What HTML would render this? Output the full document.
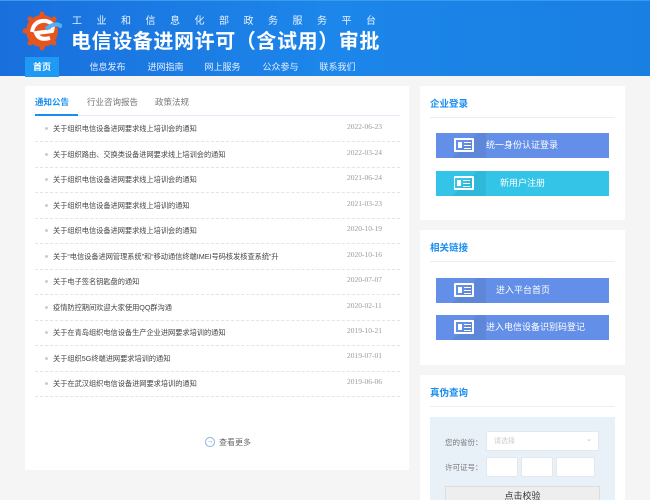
<!DOCTYPE html><html><head><meta charset="utf-8"><style>
*{margin:0;padding:0;box-sizing:border-box}
html,body{width:650px;height:500px;overflow:hidden}
body{background:#f5f5f5;font-family:"Liberation Sans","Noto Sans CJK SC",sans-serif;position:relative}
.hd{position:absolute;left:0;top:0;width:650px;height:76px;background:linear-gradient(90deg,#1a6fdc 0%,#1c86ea 50%,#1a7fe2 100%);border-top:1px solid #3a9af0}
.hd .sub{position:absolute;left:72px;top:11px;color:#e8f2ff;font-size:10px;letter-spacing:14.5px;white-space:nowrap}
.hd .ttl{position:absolute;left:71px;top:24px;color:#fff;font-size:20px;font-weight:bold;letter-spacing:0.6px;white-space:nowrap}
.nav{position:absolute;top:56px;left:0;height:20px;width:650px}
.nav span{position:absolute;top:0;height:20px;line-height:20px;color:#e6f0ff;font-size:9px;text-align:center}
.nav .on{background:#1e9af5;left:25px;width:34px;color:#fff;font-weight:bold}
.pn{position:absolute;background:#fff}
.row{position:absolute;left:53px;width:290px;font-size:7.2px;color:#444;white-space:nowrap;overflow:hidden}
.rb{position:absolute;left:45px;width:3px;height:3px;background:#ccc;border-radius:50%}
.dt{position:absolute;left:347px;font-size:7.5px;color:#999;font-family:"Liberation Serif",serif;white-space:nowrap}
.sep{position:absolute;left:35px;width:365px;border-top:1px dashed #e4e4e4}
.h3{position:absolute;left:430px;font-size:9.5px;font-weight:bold;color:#1a8ef0}
.ln{position:absolute;left:430px;width:185px;height:1px;background:#eee}
.btn{position:absolute;left:436px;width:173px;height:25px;background:#648fe8;color:#fff;font-size:9px;line-height:25px;overflow:hidden}
.btn:before{content:"";position:absolute;left:0;top:0;width:50px;height:25px;background:linear-gradient(135deg,transparent 55%,rgba(0,0,0,.06) 55%)}
.ic{position:absolute;left:18px;top:5px;width:20px;height:14px;border:2px solid #fff;border-radius:1px}
.ic:before{content:"";position:absolute;left:2px;top:2px;width:4px;height:6px;background:#fff}
.ic:after{content:"";position:absolute;left:8px;top:2px;width:7px;height:1px;background:#fff;box-shadow:0 3px #fff,0 6px #fff}
.in{position:absolute;background:#fff;border:1px solid #e2e8ee;border-radius:2px;height:20px}
</style></head><body>
<div class="hd">
<svg style="position:absolute;left:22px;top:10px" width="40" height="40" viewBox="0 0 40 40"><g fill="#e8541e"><circle cx="20" cy="20" r="16"/></g><g fill="#e8541e"><circle cx="20" cy="3" r="2.5"/><circle cx="20" cy="37" r="2.5"/><circle cx="3" cy="20" r="2.5"/><circle cx="8" cy="8" r="2.5"/><circle cx="8" cy="32" r="2.5"/><circle cx="32" cy="32" r="2.5"/><circle cx="32" cy="8" r="2.5"/></g><path d="M10 21 Q12 9 24 10 Q33 12 30 20 L14 22 Q17 30 28 27" fill="none" stroke="#fff" stroke-width="4"/><path d="M24 18 Q34 10 40 16" stroke="#4fb0f5" stroke-width="4" fill="none"/></svg>
<div class="sub">工业和信息化部政务服务平台</div>
<div class="ttl">电信设备进网许可（含试用）审批</div>
<div class="nav"><span class="on">首页</span><span style="left:85px;width:45px">信息发布</span><span style="left:143px;width:45px">进网指南</span><span style="left:200px;width:45px">网上服务</span><span style="left:258px;width:45px">公众参与</span><span style="left:315px;width:45px">联系我们</span></div>
</div>
<div class="pn" style="left:25px;top:86px;width:384px;height:384px"></div>
<div style="position:absolute;left:35px;top:96px;font-size:8.5px;color:#1a8ef0;font-weight:bold">通知公告</div>
<div style="position:absolute;left:87px;top:96px;font-size:8.5px;color:#777">行业咨询报告</div>
<div style="position:absolute;left:155px;top:96px;font-size:8.5px;color:#777">政策法规</div>
<div style="position:absolute;left:35px;top:115px;width:365px;height:1px;background:#e3ecf8"></div>
<div style="position:absolute;left:35px;top:114px;width:43px;height:2px;background:#1a8ef0"></div>
<div class="row" style="top:124px">关于组织电信设备进网要求线上培训会的通知</div><div class="dt" style="top:122px">2022-06-23</div>
<div class="row" style="top:150px">关于组织路由、交换类设备进网要求线上培训会的通知</div><div class="dt" style="top:148px">2022-03-24</div>
<div class="row" style="top:175px">关于组织电信设备进网要求线上培训会的通知</div><div class="dt" style="top:173px">2021-06-24</div>
<div class="row" style="top:201px">关于组织电信设备进网要求线上培训的通知</div><div class="dt" style="top:199px">2021-03-23</div>
<div class="row" style="top:226px">关于组织电信设备进网要求线上培训会的通知</div><div class="dt" style="top:224px">2020-10-19</div>
<div class="row" style="top:252px">关于“电信设备进网管理系统”和“移动通信终端IMEI号码核发核查系统”升</div><div class="dt" style="top:250px">2020-10-16</div>
<div class="row" style="top:277px">关于电子签名钥匙盘的通知</div><div class="dt" style="top:275px">2020-07-07</div>
<div class="row" style="top:303px">疫情防控期间欢迎大家使用QQ群沟通</div><div class="dt" style="top:301px">2020-02-11</div>
<div class="row" style="top:328px">关于在青岛组织电信设备生产企业进网要求培训的通知</div><div class="dt" style="top:326px">2019-10-21</div>
<div class="row" style="top:354px">关于组织5G终端进网要求培训的通知</div><div class="dt" style="top:351px">2019-07-01</div>
<div class="row" style="top:379px">关于在武汉组织电信设备进网要求培训的通知</div><div class="dt" style="top:377px">2019-06-06</div>
<div class="rb" style="top:127px"></div><div class="rb" style="top:153px"></div><div class="rb" style="top:178px"></div><div class="rb" style="top:204px"></div><div class="rb" style="top:229px"></div><div class="rb" style="top:255px"></div><div class="rb" style="top:280px"></div><div class="rb" style="top:306px"></div><div class="rb" style="top:331px"></div><div class="rb" style="top:357px"></div><div class="rb" style="top:382px"></div>
<div class="sep" style="top:141px"></div><div class="sep" style="top:167px"></div><div class="sep" style="top:192px"></div><div class="sep" style="top:218px"></div><div class="sep" style="top:243px"></div><div class="sep" style="top:269px"></div><div class="sep" style="top:294px"></div><div class="sep" style="top:320px"></div><div class="sep" style="top:345px"></div><div class="sep" style="top:371px"></div><div class="sep" style="top:396px"></div>
<div style="position:absolute;left:205px;top:437px;width:10px;height:10px;border:1px solid #8ab2e0;border-radius:50%;font-size:7px;line-height:8px;text-align:center;color:#5b8fd0">→</div>
<div style="position:absolute;left:219px;top:437px;font-size:8px;color:#666">查看更多</div>

<div class="pn" style="left:420px;top:86px;width:205px;height:134px"></div>
<div class="h3" style="top:96px">企业登录</div><div class="ln" style="top:117px"></div>
<div class="btn" style="top:133px"><div class="ic"></div><span style="position:absolute;left:50px">统一身份认证登录</span></div>
<div class="btn" style="top:171px;background:#33c4e8"><div class="ic" style="border-left-width:1px"></div><span style="position:absolute;left:64px">新用户注册</span></div>
<div class="pn" style="left:420px;top:230px;width:205px;height:135px"></div>
<div class="h3" style="top:240px">相关链接</div><div class="ln" style="top:261px"></div>
<div class="btn" style="top:278px"><div class="ic"></div><span style="position:absolute;left:60px">进入平台首页</span></div>
<div class="btn" style="top:315px"><div class="ic"></div><span style="position:absolute;left:50px">进入电信设备识别码登记</span></div>
<div class="pn" style="left:420px;top:375px;width:205px;height:125px"></div>
<div class="h3" style="top:385px">真伪查询</div><div class="ln" style="top:406px"></div>
<div style="position:absolute;left:430px;top:417px;width:185px;height:83px;background:#e8f0f8"></div>
<div style="position:absolute;left:445px;top:437px;font-size:7.5px;color:#777">您的省份：</div>
<div class="in" style="left:486px;top:431px;width:113px"><span style="position:absolute;left:7px;top:4px;font-size:7px;color:#ccc">请选择</span><span style="position:absolute;right:6px;top:3px;font-size:7px;color:#bbb">⌄</span></div>
<div style="position:absolute;left:445px;top:462px;font-size:7.5px;color:#777">许可证号：</div>
<div class="in" style="left:486px;top:457px;width:32px"></div><div class="in" style="left:521px;top:457px;width:32px"></div><div class="in" style="left:556px;top:457px;width:39px"></div>
<div style="position:absolute;left:445px;top:486px;width:155px;height:14px;overflow:hidden;background:#eee;border:1px solid #ddd;border-bottom:none;text-align:center;font-size:9px;line-height:18px;color:#333">点击校验</div>
</body></html>
